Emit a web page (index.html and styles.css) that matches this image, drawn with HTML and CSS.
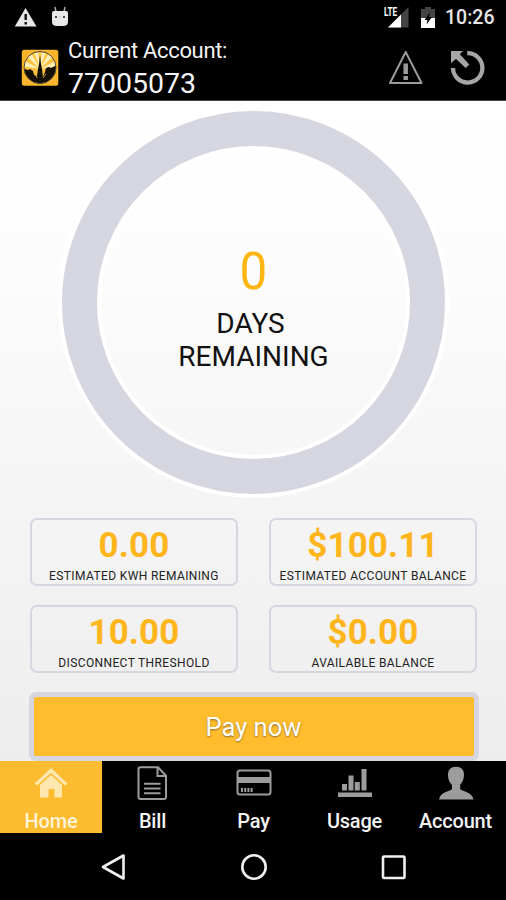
FILE: index.html
```html
<!DOCTYPE html>
<html lang="en">
<head>
<meta charset="utf-8">
<title>Current Account</title>
<link rel="stylesheet" href="styles.css">
</head>
<body>
<div class="app">
  <div class="status">
    <svg class="status-alert" width="24" height="22" viewBox="0 0 24 22"><path d="M11.5 1 22.5 19.500H.8z" fill="#e8e8e8"/><path d="M11.7 7v6M11.7 15v2.500" stroke="#111" stroke-width="2.400"/></svg>
    <svg class="status-bot" width="18" height="22" viewBox="0 0 18 22"><path d="M4 1 5 6M14 1l-1 5" stroke="#aaa" stroke-width="1.5"/><path d="M1 7q0-2 2-2h12q2 0 2 2v9q0 4-5 4H6q-5 0-5-4z" fill="#e8e8e8"/><circle cx="5" cy="11" r="1.1" fill="#222"/><circle cx="13" cy="11" r="1.1" fill="#222"/><path d="M8 11h2" stroke="#bbb"/></svg>
    <div class="signal">
      <span class="lte">LTE</span>
      <svg width="21" height="21" viewBox="0 0 21 21"><path d="M20.500 0v20.500H0z" fill="#444"/><path d="M13 7.500v13H0z" fill="#fff"/></svg>
    </div>
    <svg class="battery" width="14" height="22" viewBox="0 0 14 22"><path d="M4 0h6v2h4v10H0V2h4z" fill="#444"/><path d="M0 11h14v10H0z" fill="#fff"/><path d="M9 5 3.500 13h3l-1 4.500L11 10H8z" fill="#000"/></svg>
    <span class="time">10:26</span>
  </div>
  <header class="header">
    <svg class="logo" width="38" height="38" viewBox="0 0 38 38">
      <rect x=".8" y=".8" width="36.500" height="36" rx="2.500" fill="#f8b52c"/>
      <clipPath id="disc"><circle cx="19" cy="18.500" r="16"/></clipPath>
      <g clip-path="url(#disc)">
        <path d="M0 0h38v38H0z" fill="#fbc23c"/>
        <path d="M19 20 0 17V10zM19 20 3 5 8 0zM19 20 12 0h5zM19 20 21 0h5zM19 20 30 0l5 5zM19 20l19-10v7z" fill="#fff0b5"/>
        <path d="M0 20h4l3 1 2-1 3 2 1 4 3 1 1-7 1-5 1-9 1 9 1 5 1 8 2-5 1-4 3-1 2 1 4-2h6v22H0z" fill="#151006"/>
        <path d="m13.500 25 3 4M22 29l3-4" stroke="#c09a42" stroke-width="1"/>
      </g>
      <circle cx="19" cy="18.500" r="16" fill="none" stroke="#4c4639" stroke-width="1"/>
    </svg>
    <div class="account">
      <div class="account-label">Current Account:</div>
      <div class="account-number">77005073</div>
    </div>
    <svg class="warn" width="36" height="36" viewBox="0 0 36 36" fill="none" stroke="#9b9b9b"><path d="M17.700 2 33.500 33H2z" stroke-width="2" stroke-linejoin="round"/><path d="M17.700 13.500v10.500M17.700 26v4" stroke-width="4.500"/></svg>
    <svg class="refresh" width="36" height="36" viewBox="0 0 36 36"><path d="M17.200 3.200A14.700 14.700 0 1 1 3 18" fill="none" stroke="#a6a6a6" stroke-width="4.300"/><path d="M1 1h12L9.800 4.300 19.300 14.500 15.700 18 6 9 1 13z" fill="#a6a6a6"/></svg>
  </header>
  <main class="main">
    <div class="ring">
      <div class="days">0</div>
      <div class="days-label"><span class="days-word">DAYS</span><br>REMAINING</div>
    </div>
    <div class="cards">
      <div class="card"><div class="value">0.00</div><div class="caption">ESTIMATED KWH REMAINING</div></div>
      <div class="card"><div class="value">$100.11</div><div class="caption">ESTIMATED ACCOUNT BALANCE</div></div>
      <div class="card"><div class="value">10.00</div><div class="caption">DISCONNECT THRESHOLD</div></div>
      <div class="card"><div class="value">$0.00</div><div class="caption">AVAILABLE BALANCE</div></div>
    </div>
    <button class="pay">Pay now</button>
  </main>
  <nav class="tabs">
    <div class="tab active">
      <svg width="36" height="36" viewBox="0 0 36 36" fill="#ffe7b0"><path d="M18 2 34.500 17.500 32 19.500 18 7 4 19.500 1.500 17.500z"/><path d="M18 9 29 19V31.500h-7.500V23h-6v8.500H7V19z"/></svg>
      <span>Home</span>
    </div>
    <div class="tab">
      <svg width="36" height="36" viewBox="0 0 36 36" fill="none" stroke="#9c9c9c" stroke-width="2"><path d="M5.500 1.200H23l8 8.500V31q0 2-2 2H5.500q-2 0-2-2V3q0-1.800 2-1.800z"/><path d="M22.500 1.500V10H31M9 17.700h16.500M9 22.500h16.500M9 27.300h16.500"/></svg>
      <span>Bill</span>
    </div>
    <div class="tab">
      <svg width="36" height="36" viewBox="0 0 36 36"><rect x="1.500" y="4.500" width="33" height="24" rx="2.500" fill="none" stroke="#9c9c9c" stroke-width="2"/><path d="M1.500 11h33v6h-33z" fill="#9c9c9c"/><path d="M5 24h12" stroke="#9c9c9c" stroke-width="4" stroke-dasharray="2 1.200"/></svg>
      <span>Pay</span>
    </div>
    <div class="tab">
      <svg width="36" height="36" viewBox="0 0 36 36" fill="#9c9c9c"><path d="M5 18h5v6.500H5zM11.500 9.500h5v15h-5zM17.800 16h5v8.500h-5zM24.500 3h5v21.500h-5zM1 26.500h34V31H1z"/></svg>
      <span>Usage</span>
    </div>
    <div class="tab">
      <svg width="36" height="36" viewBox="0 0 36 36" fill="#9c9c9c"><path d="M18 .8c5.200 0 8.300 3 8 8.500-.2 4-1.500 7-3.800 9.500v4.500C26.500 26 34 26.500 35.500 33.500H1C2.500 26.500 9.500 26 14 23.300V19c-2.500-2.500-4-5.500-4-9.500C9.800 3.800 12.800.8 18 .8z"/></svg>
      <span>Account</span>
    </div>
  </nav>
  <div class="system-nav">
    <svg width="28" height="28" viewBox="0 0 28 28"><path d="M24.500 2.500v23L4 14z"/></svg>
    <svg width="28" height="28" viewBox="0 0 28 28"><circle cx="14" cy="14" r="11.700"/></svg>
    <svg width="28" height="28" viewBox="0 0 28 28"><rect x="3" y="3.500" width="21.500" height="21.500" rx="1"/></svg>
  </div>
</div>
</body>
</html>
```

FILE: styles.css
```css
* { box-sizing: border-box; }
body { margin: 0; background: #000; font-family: Roboto, "Liberation Sans", sans-serif; }
svg { display: block; flex: none; }
.app { width: 506px; height: 900px; display: flex; flex-direction: column; overflow: hidden; }

.status { height: 36px; background: #000; display: flex; align-items: flex-start; padding: 7px 0 0 14px; color: #e6e6e6; }
.status-bot { margin-left: 13px; margin-top: -1px; }
.signal { display: flex; margin-left: auto; }
.signal svg { margin-left: -8px; }
.lte { font-size: 12px; font-weight: 700; line-height: 12px; width: 13px; margin-right: -1px; color: #fff; transform: scaleX(.68); transform-origin: left; margin-top: -1px; }
.battery { margin-left: 12px; }
.time { width: 48px; margin: 0 13px 0 10px; font-size: 19.500px; font-weight: 500; line-height: 22px; white-space: nowrap; }

.header { height: 65px; flex: none; background: #000; color: #f4f4f4; display: flex; align-items: flex-start; border-bottom: 1px solid #444; }
.logo { margin: 13px 0 0 21px; }
.account { margin: 2px 0 0 9px; white-space: nowrap; }
.account-label { font-size: 22px; line-height: 26px; letter-spacing: -.33px; }
.account-number { font-size: 28.500px; line-height: 32px; margin-top: 4px; }
.warn { margin: 14px 0 0 auto; }
.refresh { margin: 14px 20px 0 26px; }

.main { height: 660px; flex: none; background: linear-gradient(#fff 0, #fdfdfd 20%, #ededed 100%); display: flex; flex-direction: column; align-items: center; }
.ring { width: 383px; height: 383px; flex: none; margin: 10px 0 0 1px; border-radius: 50%; border: 35px solid #d6d6e1; box-shadow: 0 0 0 4px #fff, inset 0 0 0 4px #fff; text-align: center; color: #111; }
.days { margin-top: 95px; font-size: 52px; line-height: 62px; color: #ffb612; transform: scaleX(.95); }
.days-label { font-size: 28px; line-height: 33px; margin-top: 4px; }
.days-word { margin-right: 6px; }
.cards { width: 447px; flex: none; display: grid; grid-template-columns: 208px 208px; column-gap: 31px; row-gap: 19px; margin: 24px 0 0 1px; }
.card { height: 68px; border: 2px solid #d6d6e1; border-radius: 7px; text-align: center; white-space: nowrap; }
.value { font-size: 35px; font-weight: 700; line-height: 42px; margin-top: 5px; letter-spacing: .1px; color: #ffb61c; }
.caption { font-size: 12px; line-height: 14px; margin-top: 2px; letter-spacing: .38px; color: #222; }
.pay { width: 450px; height: 69px; flex: none; margin: 19px 0 0 1px; padding: 0; border: 5px solid #d6d6e1; border-radius: 7px; background: #ffbd2e; color: #fff; font: 25.500px/58px Roboto, "Liberation Sans", sans-serif; text-shadow: 0 1px 2px #8a6a2a; }

.tabs { height: 72px; flex: none; background: #000; display: grid; grid-template-columns: 102px repeat(4, 101px); }
.tab { display: flex; flex-direction: column; align-items: center; padding-top: 5px; color: #f4f4f4; font-size: 20px; font-weight: 500; line-height: 24px; letter-spacing: -.2px; }
.tab span { margin-top: 7px; }
.tab.active { background: #fdbb2f; color: #fff4d8; }
.system-nav { height: 67px; flex: none; background: #000; display: flex; justify-content: space-between; padding: 20px 98px 0 99px; }
.system-nav svg { fill: none; stroke: #f0f0f0; stroke-width: 2.600; stroke-linejoin: round; }
```
